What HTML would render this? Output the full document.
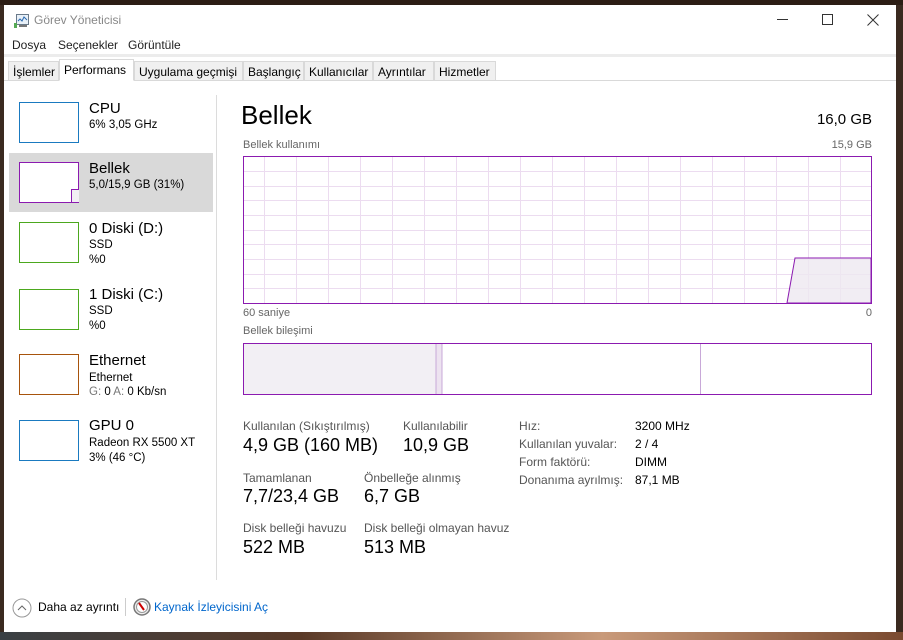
<!DOCTYPE html>
<html><head><meta charset="utf-8"><style>
*{margin:0;padding:0;box-sizing:border-box}
body{width:903px;height:640px;background:#3a2a20;position:relative;overflow:hidden;font-family:"Segoe UI","Liberation Sans",sans-serif;color:#000}
.a{position:absolute;white-space:nowrap}
#win{position:absolute;left:4px;top:5px;width:892px;height:627px;background:#fff;overflow:hidden}
.tab{position:absolute;top:56px;height:20px;background:#f0f0f0;border:1px solid #d9d9d9;font-size:12px;padding:3px 4px 0 4px}
.th{position:absolute;left:15px;width:60px;height:41px;background:#fff}
.nm{font-size:15px}
.sm{font-size:11.5px}
.lbl{font-size:11px;color:#666}
.big{font-size:18px}
.st{font-size:12px;color:#555}
.sv{font-size:12px}
</style></head><body>
<div style="position:absolute;left:0;top:0;width:903px;height:5px;background:#2c1d14"></div>
<div style="position:absolute;left:0;top:632px;width:903px;height:8px;background:linear-gradient(90deg,#3a4044,#5a3a28,#c99a7a,#7a4a30)"></div>
<div id="win">
<!-- title bar -->
<svg class="a" style="left:10px;top:9px" width="16" height="14"><rect x="2.5" y="0.5" width="12" height="10" fill="#e8f0f8" stroke="#6a7a8a"/><polyline points="4,7 6,5 8,7 10,3 13,6" fill="none" stroke="#2a6ab0"/><rect x="0" y="9" width="3" height="5" fill="#5a5"/><rect x="5" y="11" width="8" height="2" fill="#777"/></svg>
<div class="a" style="left:30px;top:8px;font-size:12px;color:#888">Görev Yöneticisi</div>
<div class="a" style="left:773px;top:14px;width:11px;height:1px;background:#333"></div>
<div class="a" style="left:818px;top:9px;width:11px;height:11px;border:1px solid #333"></div>
<svg class="a" style="left:863px;top:9px" width="12" height="12"><path d="M0.5 0.5L11.5 11.5M11.5 0.5L0.5 11.5" stroke="#333"/></svg>
<!-- menu -->
<div class="a" style="left:8px;top:33px;font-size:12px;color:#222">Dosya</div>
<div class="a" style="left:54px;top:33px;font-size:12px;color:#222">Seçenekler</div>
<div class="a" style="left:124px;top:33px;font-size:12px;color:#222">Görüntüle</div>
<div class="a" style="left:0;top:49px;width:892px;height:3px;background:#ececec"></div>
<!-- tabs -->
<div class="a" style="left:0;top:75px;width:892px;height:1px;background:#d9d9d9"></div>
<div class="tab" style="left:4px;width:51px">İşlemler</div>
<div class="tab" style="left:55px;top:54px;height:22px;width:75px;background:#fff;border-bottom-color:#fff;padding-top:3px">Performans</div>
<div class="tab" style="left:130px;width:109px">Uygulama geçmişi</div>
<div class="tab" style="left:239px;width:61px">Başlangıç</div>
<div class="tab" style="left:300px;width:69px">Kullanıcılar</div>
<div class="tab" style="left:369px;width:61px">Ayrıntılar</div>
<div class="tab" style="left:430px;width:62px">Hizmetler</div>
<!-- sidebar -->
<div class="a" style="left:212px;top:90px;width:1px;height:485px;background:#dcdcdc"></div>
<div class="a" style="left:5px;top:148px;width:204px;height:59px;background:#d9d9d9"></div>
<div class="th" style="top:97px;border:1px solid #1a7ac0"></div>
<div class="a nm" style="left:85px;top:95px">CPU</div><div class="a sm" style="left:85px;top:114px">6% 3,05 GHz</div>
<div class="th" style="top:157px;border:1px solid #8b1ab0"><div class="a" style="left:51px;top:26px;width:8px;height:13px;border:1px solid #8b1ab0;border-right:0;border-bottom:0;background:#f2eff4"></div></div>
<div class="a nm" style="left:85px;top:155px">Bellek</div><div class="a sm" style="left:85px;top:174px">5,0/15,9 GB (31%)</div>
<div class="th" style="top:217px;border:1px solid #4ca81e"></div>
<div class="a nm" style="left:85px;top:215px">0 Diski (D:)</div><div class="a sm" style="left:85px;top:234px">SSD</div><div class="a sm" style="left:85px;top:249px">%0</div>
<div class="th" style="top:284px;border:1px solid #4ca81e"></div>
<div class="a nm" style="left:85px;top:281px">1 Diski (C:)</div><div class="a sm" style="left:85px;top:300px">SSD</div><div class="a sm" style="left:85px;top:315px">%0</div>
<div class="th" style="top:349px;border:1px solid #a7540c"></div>
<div class="a nm" style="left:85px;top:347px">Ethernet</div><div class="a sm" style="left:85px;top:367px">Ethernet</div><div class="a sm" style="left:85px;top:381px"><span style="color:#777">G:</span> 0 <span style="color:#777">A:</span> 0 Kb/sn</div>
<div class="th" style="top:415px;border:1px solid #1a7ac0"></div>
<div class="a nm" style="left:85px;top:412px">GPU 0</div><div class="a sm" style="left:85px;top:432px">Radeon RX 5500 XT</div><div class="a sm" style="left:85px;top:447px">3% (46 °C)</div>
<!-- main -->
<div class="a" style="left:237px;top:95px;font-size:26px">Bellek</div>
<div class="a" style="right:24px;top:106px;font-size:15px">16,0 GB</div>
<div class="a lbl" style="left:239px;top:134px">Bellek kullanımı</div>
<div class="a lbl" style="right:24px;top:134px">15,9 GB</div>
<svg class="a" style="left:239px;top:151px" width="629" height="148">
<g stroke="#ecdcf0" stroke-width="1">
<path d="M21.5 0V148M53.5 0V148M85.5 0V148M117.5 0V148M149.5 0V148M181.5 0V148M213.5 0V148M245.5 0V148M277.5 0V148M309.5 0V148M341.5 0V148M373.5 0V148M405.5 0V148M437.5 0V148M469.5 0V148M501.5 0V148M533.5 0V148M565.5 0V148M597.5 0V148"/>
<path d="M0 15.5H629M0 30.5H629M0 44.5H629M0 59.5H629M0 74.5H629M0 88.5H629M0 103.5H629M0 118.5H629M0 132.5H629"/>
</g>
<polygon points="544,147 552,102 628,102 628,147" fill="#ede8f0" fill-opacity="0.8" stroke="#8b1ab0"/>
<rect x="0.5" y="0.5" width="628" height="147" fill="none" stroke="#8b1ab0"/>
</svg>
<div class="a lbl" style="left:239px;top:302px">60 saniye</div>
<div class="a lbl" style="right:24px;top:302px">0</div>
<div class="a lbl" style="left:239px;top:320px">Bellek bileşimi</div>
<svg class="a" style="left:239px;top:338px" width="629" height="52">
<rect x="0.5" y="0.5" width="193" height="51" fill="#f2eff4"/>
<rect x="193" y="0.5" width="6" height="51" fill="#ede3f0" stroke="#c8a8d8"/>
<path d="M457.5 0V52" stroke="#c8a8d8"/>
<rect x="0.5" y="0.5" width="628" height="51" fill="none" stroke="#8b1ab0"/>
</svg>
<div class="a st" style="left:239px;top:414px">Kullanılan (Sıkıştırılmış)</div>
<div class="a big" style="left:239px;top:430px">4,9 GB (160 MB)</div>
<div class="a st" style="left:399px;top:414px">Kullanılabilir</div>
<div class="a big" style="left:399px;top:430px">10,9 GB</div>
<div class="a st" style="left:239px;top:466px">Tamamlanan</div>
<div class="a big" style="left:239px;top:481px">7,7/23,4 GB</div>
<div class="a st" style="left:360px;top:466px">Önbelleğe alınmış</div>
<div class="a big" style="left:360px;top:481px">6,7 GB</div>
<div class="a st" style="left:239px;top:516px">Disk belleği havuzu</div>
<div class="a big" style="left:239px;top:532px">522 MB</div>
<div class="a st" style="left:360px;top:516px">Disk belleği olmayan havuz</div>
<div class="a big" style="left:360px;top:532px">513 MB</div>
<div class="a st" style="left:515px;top:414px">Hız:</div><div class="a sv" style="left:631px;top:414px">3200 MHz</div>
<div class="a st" style="left:515px;top:432px">Kullanılan yuvalar:</div><div class="a sv" style="left:631px;top:432px">2 / 4</div>
<div class="a st" style="left:515px;top:450px">Form faktörü:</div><div class="a sv" style="left:631px;top:450px">DIMM</div>
<div class="a st" style="left:515px;top:468px">Donanıma ayrılmış:</div><div class="a sv" style="left:631px;top:468px">87,1 MB</div>
<!-- footer -->
<svg class="a" style="left:8px;top:593px" width="20" height="20"><circle cx="10" cy="10" r="9" fill="#fff" stroke="#999"/><path d="M6 12L10 8L14 12" fill="none" stroke="#666"/></svg>
<div class="a" style="left:34px;top:595px;font-size:12px">Daha az ayrıntı</div>
<div class="a" style="left:121px;top:593px;width:1px;height:18px;background:#ccc"></div>
<svg class="a" style="left:129px;top:593px" width="18" height="18"><circle cx="9" cy="9" r="8" fill="#eee" stroke="#777" stroke-width="1.5"/><circle cx="9" cy="9" r="5.5" fill="#fff" stroke="#999"/><path d="M6 5L11 12" stroke="#c00" stroke-width="2"/></svg>
<div class="a" style="left:150px;top:595px;font-size:12px;color:#0066cc">Kaynak İzleyicisini Aç</div>
</div>
</body></html>
